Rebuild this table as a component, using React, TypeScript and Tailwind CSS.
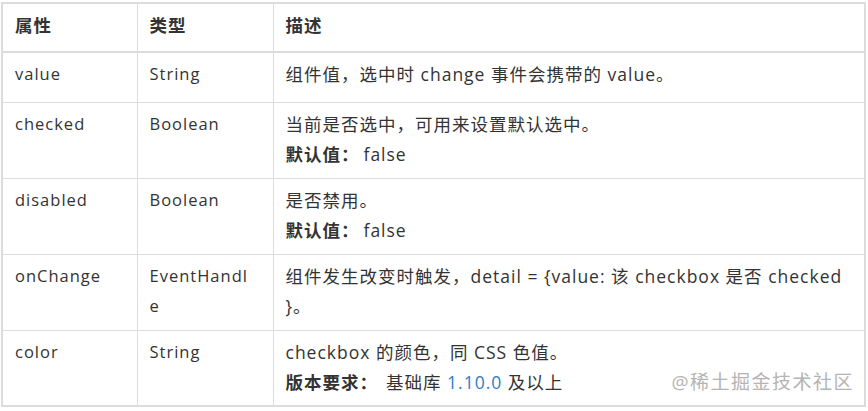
import React from 'react';

type Row = {
  name: string;
  type: React.ReactNode;
  desc: React.ReactNode;
  h: string;
};

const Label: React.FC<{ children: React.ReactNode }> = ({ children }) => (
  <span className="font-bold text-[#333]">{children}</span>
);

const rows: Row[] = [
  {
    name: 'value',
    type: 'String',
    desc: <div>组件值，选中时 change 事件会携带的 value。</div>,
    h: 'h-[50px]',
  },
  {
    name: 'checked',
    type: 'Boolean',
    desc: (
      <>
        <div>当前是否选中，可用来设置默认选中。</div>
        <div>
          <Label>默认值：</Label>
          <span className="ml-[4px]">false</span>
        </div>
      </>
    ),
    h: 'h-[76px]',
  },
  {
    name: 'disabled',
    type: 'Boolean',
    desc: (
      <>
        <div>是否禁用。</div>
        <div>
          <Label>默认值：</Label>
          <span className="ml-[4px]">false</span>
        </div>
      </>
    ),
    h: 'h-[76px]',
  },
  {
    name: 'onChange',
    type: (
      <>
        EventHandl
        <br />e
      </>
    ),
    desc: (
      <>
        <div className="whitespace-nowrap">组件发生改变时触发，detail = {'{'}value: 该 checkbox 是否 checked</div>
        <div>{'}'}。</div>
      </>
    ),
    h: 'h-[76px]',
  },
  {
    name: 'color',
    type: 'String',
    desc: (
      <>
        <div>checkbox 的颜色，同 CSS 色值。</div>
        <div className="flex">
          <Label>版本要求：</Label>
          <span className="ml-[8px]">基础库 <span className="text-[#2d7dc8]">1.10.0</span> 及以上</span>
          <span className="ml-auto -mr-[2px] text-[#b4b4b4] text-[19px] tracking-[1.5px]">@稀土掘金技术社区</span>
        </div>
      </>
    ),
    h: 'h-[76px]',
  },
];

export default function App() {
  return (
    <div
      className="w-[868px] h-[411px] bg-white pt-[2px] pl-[1px] text-[#333] leading-[30px]"
      style={{ fontFamily: '"Open Sans", "Noto Sans CJK SC", sans-serif' }}
    >
      <table className="w-[865px] table-fixed border-collapse border-2 border-[#dcdcdc]">
        <colgroup>
          <col className="w-[135px]" />
          <col className="w-[136px]" />
          <col />
        </colgroup>
        <thead>
          <tr className="h-[49px] border-b-2 border-[#dcdcdc] text-[17.5px] tracking-[1px]">
            <th className="border-r border-[#dcdcdc] px-3 text-left font-bold align-top pt-[6px]">属性</th>
            <th className="border-r border-[#dcdcdc] px-3 text-left font-bold align-top pt-[6px]">类型</th>
            <th className="px-3 text-left font-bold align-top pt-[6px]">描述</th>
          </tr>
        </thead>
        <tbody>
          {rows.map((r) => (
            <tr key={r.name} className={`${r.h} border-b border-[#dcdcdc]`}>
              <td className="border-r border-[#dcdcdc] px-3 align-top pt-[6px] text-[16.5px] tracking-[1px]">{r.name}</td>
              <td className="border-r border-[#dcdcdc] px-3 align-top pt-[6px] text-[16.5px] tracking-[1px]">{r.type}</td>
              <td className="px-3 align-top pt-[6px] text-[17.5px] tracking-[1px]">{r.desc}</td>
            </tr>
          ))}
        </tbody>
      </table>
    </div>
  );
}
